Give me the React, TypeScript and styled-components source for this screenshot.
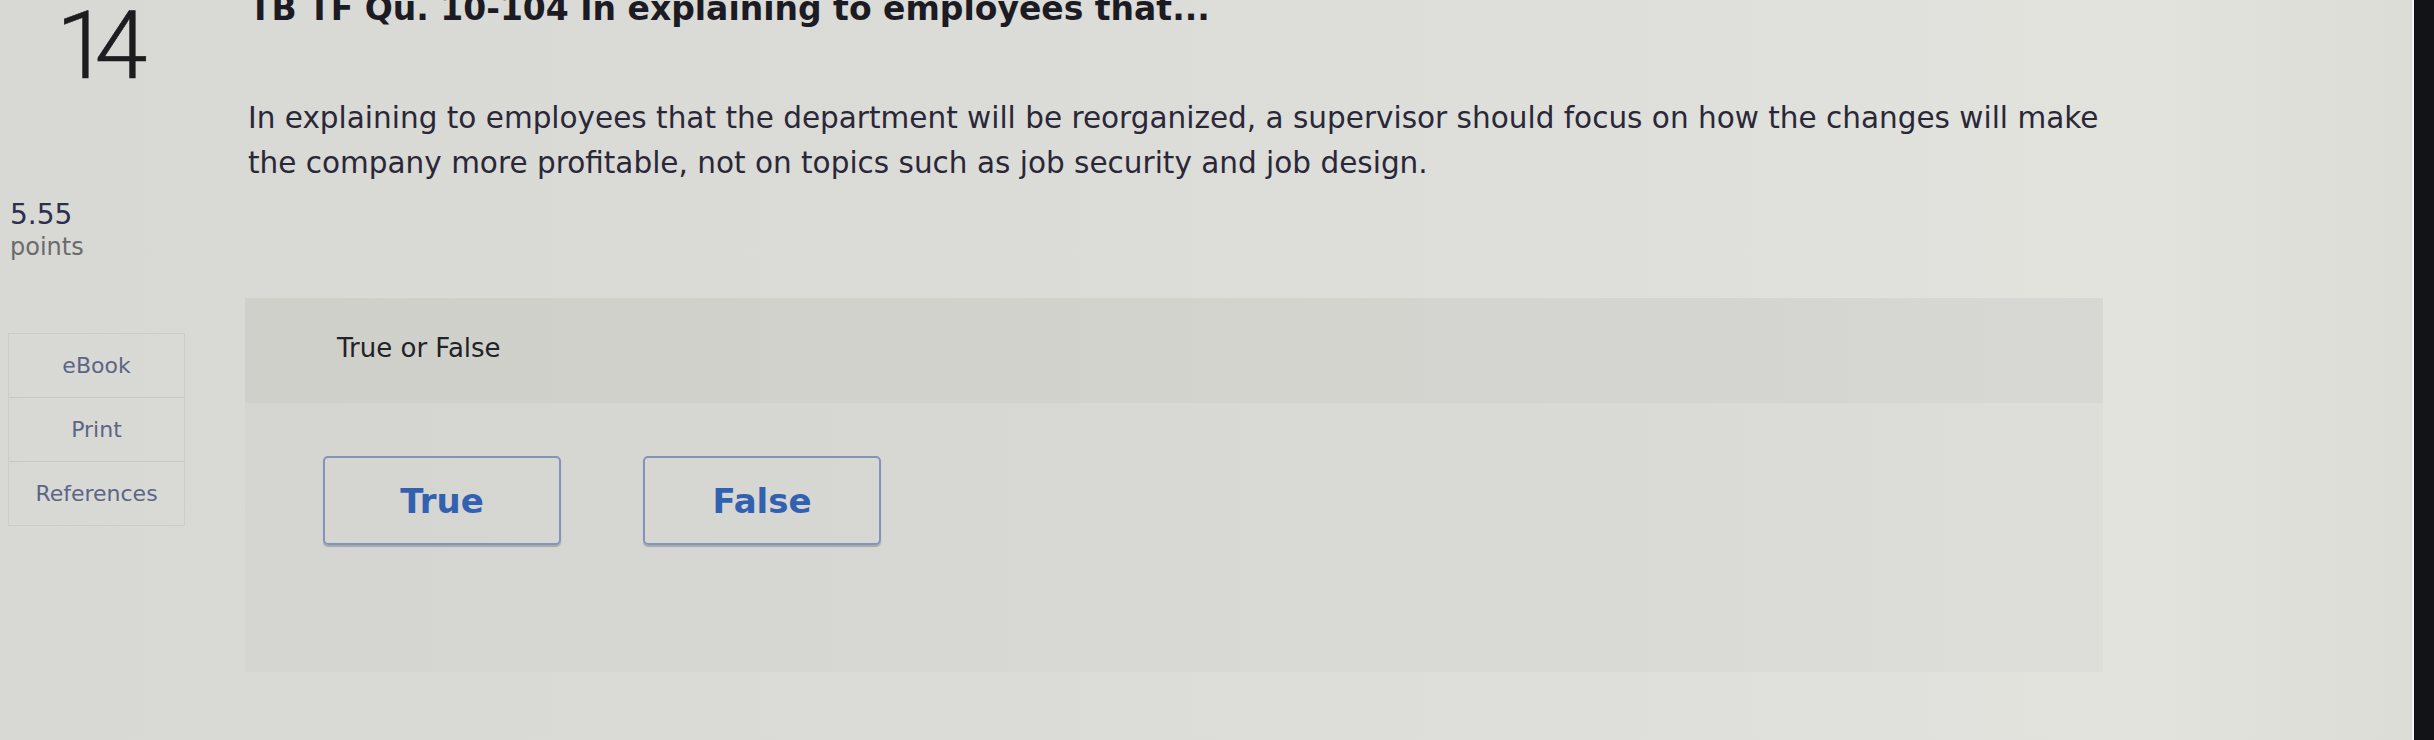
import React from 'react';
import styled, { createGlobalStyle } from 'styled-components';

const GlobalStyle = createGlobalStyle`
  html, body {
    margin: 0;
    padding: 0;
    width: 2434px;
    height: 740px;
    overflow: hidden;
  }
  body {
    font-family: 'DejaVu Sans', 'Liberation Sans', sans-serif;
  }
`;

const Screen = styled.div`
  display: flex;
  width: 2434px;
  height: 740px;
  overflow: hidden;
  background: linear-gradient(90deg, #d8d8d4 0%, #dbdbd7 40%, #dfdfdb 70%, #e3e3de 88%, #dcdcd7 100%);
`;

const Page = styled.div`
  display: flex;
  flex: 1;
`;

const Bezel = styled.div`
  width: 20px;
  background: #121316;
  border-left: 2px solid #f4f4f2;
`;

const LeftCol = styled.div`
  width: 245px;
  flex-shrink: 0;
  display: flex;
  flex-direction: column;
`;

const QNumber = styled.div`
  font-family: Roboto, Lato, 'Liberation Sans', sans-serif;
  font-weight: 300;
  font-size: 95px;
  line-height: 95px;
  letter-spacing: -14px;
  color: #1d1d1f;
  margin: -2px 0 0 56px;
  -webkit-text-stroke: 0.6px #1d1d1f;
`;

const Points = styled.div`
  margin: 106px 0 0 10px;
`;

const PointValue = styled.div`
  font-size: 28px;
  line-height: 32px;
  color: #2c2f4d;
`;

const PointLabel = styled.div`
  font-size: 24px;
  line-height: 32px;
  color: #6b6b6d;
`;

const SideBox = styled.div`
  margin: 70px 0 0 8px;
  width: 175px;
  border: 1px solid #cdcdc8;
  display: flex;
  flex-direction: column;
`;

const SideItem = styled.div`
  height: 63px;
  display: flex;
  align-items: center;
  justify-content: center;
  font-size: 22px;
  color: #5c6684;
  & + & {
    border-top: 1px solid #c8c8c3;
  }
`;

const MainCol = styled.div`
  width: 1858px;
  display: flex;
  flex-direction: column;
`;

const Title = styled.h1`
  margin: -11px 0 0 4px;
  font-size: 33px;
  line-height: 40px;
  font-weight: 700;
  color: #1c1b24;
  white-space: nowrap;
`;

const Question = styled.p`
  margin: 67px 0 0 3px;
  font-size: 29.5px;
  line-height: 45px;
  color: #2a2838;
  white-space: nowrap;
`;

const Panel = styled.div`
  margin-top: 112px;
  background: rgba(160, 160, 150, 0.06);
  display: flex;
  flex-direction: column;
`;

const PanelHead = styled.div`
  height: 105px;
  padding: 35px 0 0 92px;
  box-sizing: border-box;
  background: rgba(150, 150, 140, 0.08);
  font-size: 26px;
  line-height: 30px;
  color: #222228;
`;

const Choices = styled.div`
  display: flex;
  gap: 82px;
  padding: 53px 0 127px 78px;
`;

const Choice = styled.button`
  width: 238px;
  height: 89px;
  box-sizing: border-box;
  border: 2px solid #8494b6;
  border-radius: 5px;
  background: transparent;
  box-shadow: 0 2px 1px rgba(60, 70, 100, 0.3);
  font-family: 'DejaVu Sans', 'Liberation Sans', sans-serif;
  font-size: 34px;
  font-weight: 700;
  color: #3161b0;
  cursor: pointer;
`;

export default function App() {
  return (
    <Screen>
      <GlobalStyle />
      <Page>
        <LeftCol>
          <QNumber>14</QNumber>
          <Points>
            <PointValue>5.55</PointValue>
            <PointLabel>points</PointLabel>
          </Points>
          <SideBox>
            <SideItem>eBook</SideItem>
            <SideItem>Print</SideItem>
            <SideItem>References</SideItem>
          </SideBox>
        </LeftCol>
        <MainCol>
          <Title>TB TF Qu. 10-104 In explaining to employees that...</Title>
          <Question>
            In explaining to employees that the department will be reorganized, a supervisor should focus on how the changes will make
            <br />
            the company more profitable, not on topics such as job security and job design.
          </Question>
          <Panel>
            <PanelHead>True or False</PanelHead>
            <Choices>
              <Choice>True</Choice>
              <Choice>False</Choice>
            </Choices>
          </Panel>
        </MainCol>
      </Page>
      <Bezel />
    </Screen>
  );
}
